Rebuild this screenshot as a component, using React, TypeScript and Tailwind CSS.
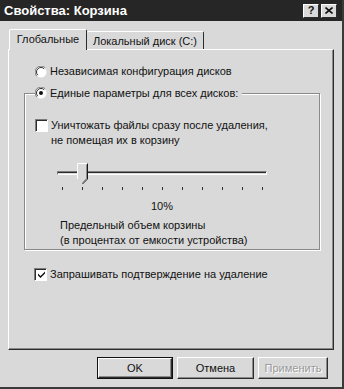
const ticks = [0, 1, 2, 3, 4, 5, 6, 7, 8, 9, 10]

function Radio({ checked }: { checked: boolean }) {
  return (
    <svg width="12" height="12" viewBox="0 0 12 12" className="shrink-0">
      <circle cx="6" cy="6" r="5.5" fill="#ffffff" />
      <path d="M10.2 1.8 A5.5 5.5 0 0 0 1.8 10.2" stroke="#7c7c7c" strokeWidth="1" fill="none" />
      <path d="M9.2 2.8 A4.5 4.5 0 0 0 2.8 9.2" stroke="#2c2c2c" strokeWidth="1" fill="none" />
      {checked && <circle cx="6" cy="6" r="2" fill="#111111" />}
    </svg>
  )
}

function Check({ checked }: { checked: boolean }) {
  return (
    <span className="flex size-[13px] shrink-0 border-t border-l border-[#7c7c7c] border-r border-b border-r-white border-b-white">
      <span className="flex flex-1 items-center justify-center border-t border-l border-[#2c2c2c] bg-white">
        {checked && (
          <svg width="9" height="9" viewBox="0 0 9 9">
            <path d="M1 3.5 L3.5 6 L8 1.5 L8 3.5 L3.5 8 L1 5.5 Z" fill="#111111" />
          </svg>
        )}
      </span>
    </span>
  )
}

function Button({ label, primary, disabled, width }: { label: string; primary?: boolean; disabled?: boolean; width: string }) {
  return (
    <div className={`${width} h-[22px] ${primary ? 'border border-[#111111]' : ''}`}>
      <div className="flex h-full items-center justify-center border-t border-l border-white border-r border-b border-r-[#2c2c2c] border-b-[#2c2c2c] shadow-[inset_-1px_-1px_0_#8a8a8a]">
        <span className={disabled ? 'text-[#9a9a9a] [text-shadow:1px_1px_0_#ffffff]' : 'text-[#111111]'}>{label}</span>
      </div>
    </div>
  )
}

export default function App() {
  return (
    <div
      className="flex h-[389px] w-[344px] flex-col overflow-hidden border-r-2 border-b-2 border-r-[#3a3a3a] border-b-[#3a3a3a] bg-[#d9d9d9] text-[11px] text-[#111111]"
      style={{ fontFamily: '"Liberation Sans", Arial, sans-serif' }}
    >
      <div className="flex h-[21px] shrink-0 items-center bg-[#262626] pr-[5px] pl-[4px]">
        <span className="text-[13px] font-bold text-white">Свойства: Корзина</span>
        <div className="ml-auto flex gap-[2px]">
          <div className="flex h-[14px] w-[16px] items-center justify-center border-t border-l border-white border-r border-b border-r-[#2c2c2c] border-b-[#2c2c2c] bg-[#d9d9d9] text-[11px] leading-none font-bold">
            ?
          </div>
          <div className="flex h-[14px] w-[16px] items-center justify-center border-t border-l border-white border-r border-b border-r-[#2c2c2c] border-b-[#2c2c2c] bg-[#d9d9d9]">
            <svg width="8" height="7" viewBox="0 0 8 7">
              <path d="M0.5 0.5 L7.5 6.5 M7.5 0.5 L0.5 6.5" stroke="#111111" strokeWidth="1.6" />
            </svg>
          </div>
        </div>
      </div>

      <div className="flex h-[28px] shrink-0 items-end pl-[9px]">
        <div className="relative z-10 -mb-px flex h-[21px] w-[78px] items-center justify-center rounded-t-[2px] border-t border-l border-white border-r border-r-[#2c2c2c] bg-[#d9d9d9] pb-[2px]">
          Глобальные
        </div>
        <div className="flex h-[18px] w-[117px] items-center justify-center rounded-t-[2px] border-t border-white border-r border-r-[#2c2c2c] bg-[#d9d9d9] pt-px">
          Локальный диск (C:)
        </div>
      </div>

      <div className="mx-[8px] h-[301px] shrink-0 border-t border-l border-white border-r border-b border-r-[#2c2c2c] border-b-[#2c2c2c] shadow-[inset_-1px_-1px_0_#8a8a8a]">
        <div className="mt-[15px] flex h-[13px] items-center gap-[2px] pl-[26px]">
          <Radio checked={false} />
          <span className="ml-[1px]">Независимая конфигурация дисков</span>
        </div>

        <fieldset className="mt-[8px] ml-[15px] w-[296px] border border-[#8a8a8a] px-[10px] shadow-[inset_1px_1px_0_#ffffff,1px_1px_0_#ffffff]">
          <legend className="flex h-[14px] items-center gap-[2px] bg-[#d9d9d9] pr-[4px]">
            <Radio checked={true} />
            <span className="ml-[1px]">Единые параметры для всех дисков:</span>
          </legend>

          <div className="mt-[18px] flex gap-[2px]">
            <div className="pt-[1px]">
              <Check checked={false} />
            </div>
            <div className="ml-[1px] leading-[15px]">
              Уничтожать файлы сразу после удаления,
              <br />
              не помещая их в корзину
            </div>
          </div>

          <div className="relative mt-[13px] ml-[22px] h-[32px] w-[210px]">
            <div className="absolute top-[10px] left-0 h-[4px] w-[210px] border-t border-l border-[#7c7c7c] border-r border-b border-r-white border-b-white">
              <div className="h-px bg-[#2c2c2c]" />
            </div>
            <svg width="11" height="22" viewBox="0 0 11 22" className="absolute top-[2px] left-[20px]">
              <path d="M0.5 16 L0.5 0.5 L10.5 0.5 L10.5 16 L5.5 21 Z" fill="#d9d9d9" />
              <path d="M0.5 16 L0.5 0.5 L10.5 0.5" stroke="#ffffff" fill="none" />
              <path d="M10.5 0.5 L10.5 16 L5.5 21" stroke="#1a1a1a" fill="none" />
              <path d="M9.5 1.5 L9.5 15.6 L5.5 19.6" stroke="#8a8a8a" fill="none" />
            </svg>
            {ticks.map((t) => (
              <div key={t} className="absolute top-[26px] h-[3px] w-px bg-[#2c2c2c]" style={{ left: 5 + t * 20 }} />
            ))}
          </div>

          <div className="mt-[6px] ml-[112px] w-[30px] text-center leading-[15px]">10%</div>

          <div className="mt-[4px] ml-[25px] pb-[1px] leading-[15px]">
            Предельный объем корзины
            <br />
            (в процентах от емкости устройства)
          </div>
        </fieldset>

        <div className="mt-[16px] flex items-center gap-[2px] pl-[25px]">
          <Check checked={true} />
          <span className="ml-[1px]">Запрашивать подтверждение на удаление</span>
        </div>
      </div>

      <div className="mt-[7px] flex gap-[4px] pl-[97px]">
        <Button label="OK" primary width="w-[76px]" />
        <Button label="Отмена" width="w-[77px]" />
        <Button label="Применить" disabled width="w-[70px]" />
      </div>
    </div>
  )
}
